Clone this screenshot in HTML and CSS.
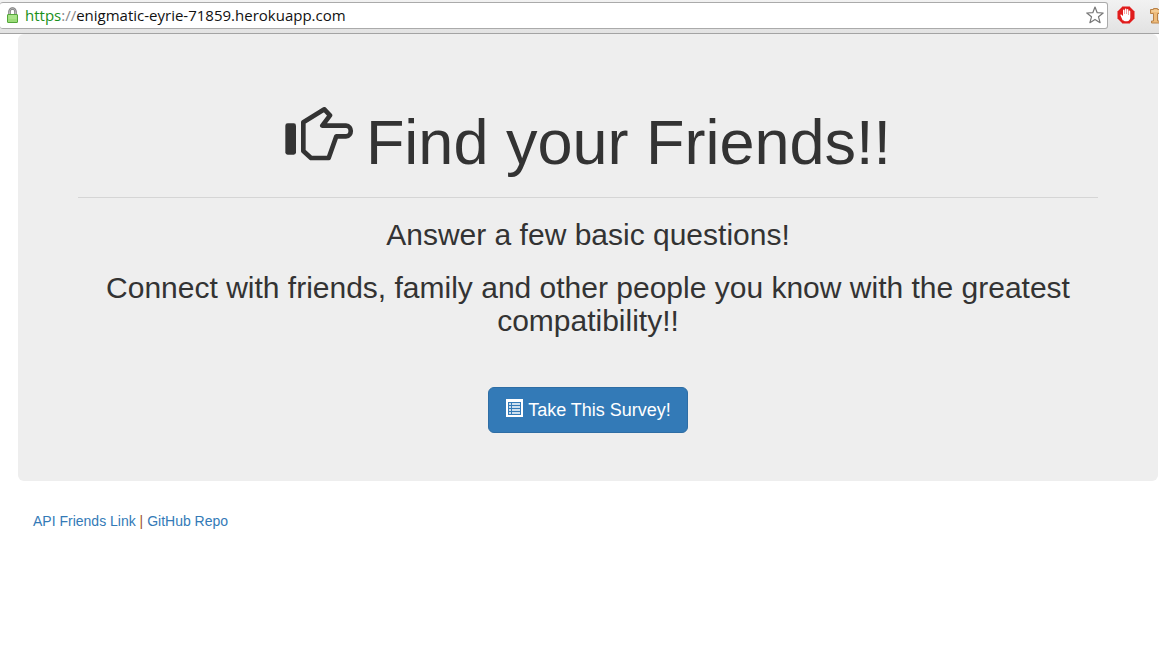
FILE: index.html
```html
<!DOCTYPE html>
<html lang="en">
<head>
<meta charset="utf-8">
<title>Find your Friends!!</title>
<link rel="stylesheet" href="styles.css">
</head>
<body>
<header class="toolbar">
  <div class="address">
    <svg class="lock" viewBox="0 0 12 16" aria-hidden="true">
      <path d="M3 8V4.500a3 3 0 0 1 6 0V8" fill="none" stroke="#777" stroke-width="2.500"/>
      <path d="M3 8V4.500a3 3 0 0 1 6 0V8" fill="none" stroke="#ccc" stroke-width="0.800"/>
      <rect x="1" y="7.500" width="10" height="8" rx="0.500" fill="#9bdc78" stroke="#53a63a"/>
      <path d="M2 9h8M2 11h8" stroke="#c0efa5" stroke-width="0.800"/>
    </svg>
    <span class="url"><span class="scheme">https</span><span class="slashes">://</span>enigmatic-eyrie-71859.herokuapp.com</span>
    <button class="icon-button" type="button" aria-label="Bookmark this page">
      <svg class="star" viewBox="0 0 18 18"><path d="M9 1l2.200 5.700 6 .3-4.700 3.800 1.600 5.900L9 13.400l-5.100 3.300 1.600-5.900L.8 7l6-.3z" fill="#fff" stroke="#777" stroke-width="1.200" stroke-linejoin="round"/></svg>
    </button>
  </div>
  <button class="icon-button" type="button" aria-label="Ad blocker">
    <svg class="blocker" viewBox="0 0 18 18"><path d="M5.500.5h7l5 5v7l-5 5h-7l-5-5v-7z" fill="#e01c1c" stroke="#e98080" stroke-width="0.700"/><path d="M5.500 14L3.500 9.500c-.4-1 .7-1.400 1.300-.6L6 10V4.500c0-1.200 1.400-1.200 1.500 0V8h.4V3.300c0-1.200 1.500-1.200 1.600 0V8h.4V3.800c0-1.200 1.500-1.200 1.500 0V9h.4V5.500c0-1.200 1.500-1.200 1.500 0v6c0 2-1.300 3.700-3.200 3.700H8c-1.200 0-2-.4-2.500-1.200z" fill="#fff"/></svg>
  </button>
  <button class="icon-button clipped" type="button" aria-label="Extension">
    <svg class="sign" viewBox="0 0 16 18"><path d="M3.500 2.500h4v1h8v4h-8v7.500h3v2h-9v-2h2V7.500h-3v-4h3z" fill="#eebc7c" stroke="#b98248"/><path d="M1.500 5h13" stroke="#f8dcb0"/></svg>
  </button>
</header>
<div class="container">
  <main class="jumbotron">
    <h1 class="title">
      <svg class="hand" viewBox="45 50 207 162" aria-hidden="true">
        <rect x="46" y="99" width="32" height="94" rx="7" fill="currentColor"/>
        <path d="M163 57L180 75L157 106H228C247 106 247 138 228 138H199L176 203H123L100 182V96Z" fill="none" stroke="currentColor" stroke-width="14" stroke-linejoin="round"/>
      </svg>
      <span>Find your Friends!!</span>
    </h1>
    <hr class="rule">
    <h2 class="lead">Answer a few basic questions!</h2>
    <h2 class="lead">Connect with friends, family and other people you know with the greatest compatibility!!</h2>
    <button class="survey" type="button">
      <svg class="list" viewBox="0 0 18 18" aria-hidden="true">
        <path d="M1 0h17v18H1z" fill="#fff"/>
        <path d="M3 3h13v13H3z" fill="#337ab7"/>
        <path d="M4 5h2M7 5h8M4 8h2M7 8h8M4 11h2M7 11h8M4 14h2M7 14h8" stroke="#fff" stroke-width="1.600"/>
      </svg>
      <span>Take This Survey!</span>
    </button>
  </main>
  <footer class="links"><a href="#api">API Friends Link</a> | <a href="#repo">GitHub Repo</a></footer>
</div>
</body>
</html>
```
FILE: styles.css
```css
* { box-sizing: border-box; }
body {
  margin: 0;
  background: #fff;
  color: #333;
  font: 14px/20px "Liberation Sans", Arial, sans-serif;
}
.toolbar {
  display: flex;
  align-items: center;
  gap: 9px;
  height: 34px;
  padding-bottom: 3px;
  overflow: hidden;
  background: linear-gradient(#f2f2f2, #e2e2e2);
  border-bottom: 1px solid #a3a3a3;
}
.address {
  display: flex;
  flex: 1;
  align-items: center;
  gap: 6px;
  height: 27px;
  padding: 0 3px 0 6px;
  background: #fff;
  border: 1px solid #aaa;
  border-left: 0;
  border-radius: 3px;
}
.lock { width: 13px; height: 16px; }
.url {
  flex: 1;
  color: #111;
  font-family: "Open Sans", "Noto Sans", sans-serif;
  font-size: 15px;
}
.scheme { color: #1a8f1a; }
.slashes { color: #888; }
.icon-button {
  display: flex;
  flex: none;
  padding: 0;
  background: none;
  border: 0;
}
.star, .blocker { width: 18px; height: 18px; }
.clipped { width: 9px; margin-left: 6px; overflow: hidden; }
.sign { flex: none; width: 16px; height: 18px; }
.container {
  max-width: 1170px;
  padding: 0 1px 0 18px;
}
.jumbotron {
  padding: 68px 60px 48px;
  background: #eee;
  border-radius: 6px;
  text-align: center;
}
.title {
  display: flex;
  justify-content: center;
  gap: 12px;
  margin: 0;
  font-size: 63px;
  font-weight: 500;
  line-height: 80px;
}
.hand { width: 69px; height: 54px; margin-top: 5px; }
.rule {
  margin: 15px 0 20px;
  border: 0;
  border-top: 1px solid #d5d5d5;
}
.lead {
  margin: 0 0 20px;
  font-size: 30px;
  font-weight: 500;
  line-height: 33px;
}
.survey {
  display: inline-flex;
  gap: 5px;
  margin-top: 30px;
  padding: 10px 16px;
  background: #337ab7;
  border: 1px solid #2e6da4;
  border-radius: 6px;
  color: #fff;
  font: 18px/24px "Liberation Sans", Arial, sans-serif;
  vertical-align: top;
}
.list { width: 18px; height: 18px; margin-top: 1px; }
.links { padding: 30px 15px; color: #a0522d; }
.links a { color: #337ab7; text-decoration: none; }
```
